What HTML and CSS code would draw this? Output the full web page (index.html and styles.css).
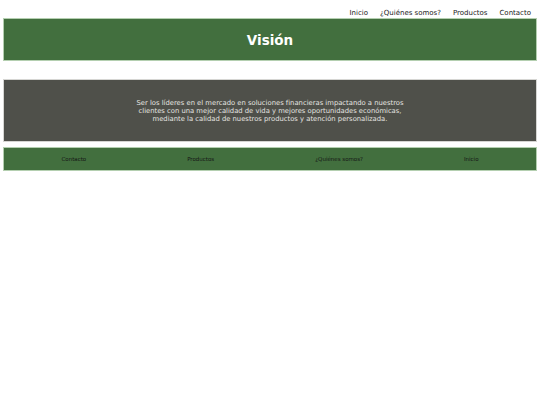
FILE: index.html
```html
<!DOCTYPE html>
<html lang="es">
<head>
<meta charset="utf-8">
<title>Visión</title>
<link rel="stylesheet" href="styles.css">
</head>
<body>
<nav class="top-nav">
  <a href="#">Inicio</a>
  <a href="#">¿Quiénes somos?</a>
  <a href="#">Productos</a>
  <a href="#">Contacto</a>
</nav>
<header class="banner">
  <h1 class="title">Visión</h1>
</header>
<section class="vision">
  <p>Ser los líderes en el mercado en soluciones financieras impactando a nuestros<br>clientes con una mejor calidad de vida y mejores oportunidades económicas,<br>mediante la calidad de nuestros productos y atención personalizada.</p>
</section>
<footer class="bottom-nav">
  <a href="#">Contacto</a>
  <a href="#">Productos</a>
  <a href="#">¿Quiénes somos?</a>
  <a href="#">Inicio</a>
</footer>
</body>
</html>
```
FILE: styles.css
```css
html, body {
  margin: 0;
  padding: 0;
  background: #ffffff;
}
body {
  padding: 0 3px;
  font-family: "DejaVu Sans", sans-serif;
}
a {
  text-decoration: none;
  color: inherit;
}
.top-nav {
  display: flex;
  justify-content: flex-end;
  gap: 12px;
  padding: 9px 6px 0 0;
  font-size: 7px;
  line-height: 9px;
  color: #222;
}
.banner {
  height: 41px;
  background: #426f3e;
  border: 1px solid #b4cfb0;
  display: flex;
  align-items: center;
  justify-content: center;
}
.title {
  margin: 0;
  font-size: 13.5px;
  font-weight: bold;
  color: #ffffff;
}
.vision {
  margin-top: 18px;
  height: 61px;
  background: #4f504a;
  border: 1px solid #d6d6d3;
  display: flex;
  align-items: center;
  justify-content: center;
}
.vision p {
  margin: 0;
  text-align: center;
  font-size: 6.8px;
  line-height: 8px;
  color: #e4e4e0;
}
.bottom-nav {
  margin-top: 5px;
  height: 22px;
  padding: 0 7px;
  background: #426f3e;
  border: 1px solid #b4cfb0;
  display: flex;
  justify-content: space-around;
  align-items: center;
  font-size: 5.5px;
  color: #151515;
}
```
